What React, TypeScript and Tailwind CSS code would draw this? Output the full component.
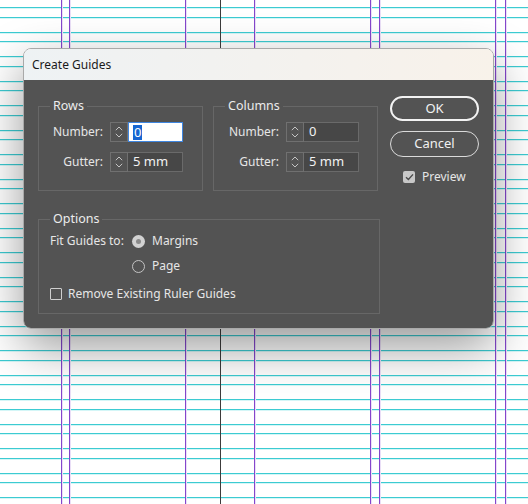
import React from 'react';

const font = { fontFamily: '"Noto Sans", "Open Sans", sans-serif' };

const hLines: number[] = [];
for (let k = 0; k < 21; k++) {
  hLines.push(7 + 24.5 * k);
  hLines.push(16.5 + 24.5 * k);
}
const vLines = [61, 69, 185, 254, 370, 379, 495, 505];

function Chevrons() {
  return (
    <div className="flex h-full w-[18px] flex-col items-center justify-between border border-[#707070] py-[3px]">
      <svg width="8" height="5" viewBox="0 0 8 5">
        <path d="M0.8 4.2 L4 1 L7.2 4.2" fill="none" stroke="#c4c4c4" strokeWidth="1" />
      </svg>
      <svg width="8" height="5" viewBox="0 0 8 5">
        <path d="M0.8 0.8 L4 4 L7.2 0.8" fill="none" stroke="#c4c4c4" strokeWidth="1" />
      </svg>
    </div>
  );
}

function Spinner({ value, focused }: { value: string; focused?: boolean }) {
  return (
    <div className="flex h-[20px]">
      <Chevrons />
      {focused ? (
        <div className="flex h-full w-[55px] items-center border border-[#3f86e0] bg-white pl-[4px]">
          <span className="bg-[#1766d1] px-[1px] text-[13px] leading-[15px] text-white">{value}</span>
        </div>
      ) : (
        <div className="flex h-full w-[55px] items-center border border-l-0 border-[#6a6a6a] bg-[#474747] pl-[5px] text-[13px] text-[#f2f2f2]">
          {value}
        </div>
      )}
    </div>
  );
}

function Group({ title, className, children }: { title: string; className: string; children: React.ReactNode }) {
  return (
    <div className={`relative border border-[#676767] ${className}`}>
      <span className="absolute left-[11px] top-[-10px] bg-[#535353] px-[3px] text-[12.5px] leading-[18px] text-[#ececec]">
        {title}
      </span>
      {children}
    </div>
  );
}

function FieldRow({ label, labelW, value, focused }: { label: string; labelW: string; value: string; focused?: boolean }) {
  return (
    <div className="flex h-[20px] items-center">
      <span className={`${labelW} text-right text-[12px] text-[#e6e6e6]`}>{label}</span>
      <div className="ml-[7px]">
        <Spinner value={value} focused={focused} />
      </div>
    </div>
  );
}

export default function App() {
  return (
    <div className="relative h-[504px] w-[528px] overflow-hidden bg-white" style={font}>
      {hLines.map((y) => (
        <div
          key={'h' + y}
          className="absolute left-0 h-[2px] w-full border-t border-[#3ccbd2] bg-[#d4f6f7]"
          style={{ top: Math.round(y) }}
        />
      ))}
      {vLines.map((x) => (
        <div
          key={'v' + x}
          className="absolute top-0 h-full w-[2px] border-l border-[#8446cc] bg-[#eadff7]"
          style={{ left: x }}
        />
      ))}
      <div className="absolute left-[220px] top-0 h-full w-[1px] bg-[#3c3c3c]" />

      <div className="absolute left-[23px] top-[48px] w-[471px] overflow-hidden rounded-[8px] border border-[#a9a9a9] shadow-[0_18px_48px_rgba(0,0,0,0.4)]">
        <div className="flex h-[31px] items-center bg-gradient-to-r from-[#eef2f4] to-[#f8f2ea] pl-[8px] text-[12px] text-[#1a1a1a]">
          Create Guides
        </div>
        <div className="flex h-[248px] gap-[10px] bg-[#535353] px-[14px]">
          <div className="flex w-[342px] flex-col pt-[26px]">
            <div className="flex gap-[10px]">
              <Group title="Rows" className="h-[85px] w-[165px]">
                <div className="flex flex-col gap-[10px] pt-[15px]">
                  <FieldRow label="Number:" labelW="w-[64px]" value="0" focused />
                  <FieldRow label="Gutter:" labelW="w-[64px]" value="5 mm" />
                </div>
              </Group>
              <Group title="Columns" className="h-[85px] w-[165px]">
                <div className="flex flex-col gap-[10px] pt-[15px]">
                  <FieldRow label="Number:" labelW="w-[65px]" value="0" />
                  <FieldRow label="Gutter:" labelW="w-[65px]" value="5 mm" />
                </div>
              </Group>
            </div>
            <Group title="Options" className="mt-[28px] h-[95px] w-[342px]">
              <div className="flex flex-col pl-[11px] pt-[13px] text-[12px] text-[#e6e6e6]">
                <div className="flex h-[16px] items-center">
                  <span className="w-[82px]">Fit Guides to:</span>
                  <span className="flex h-[13px] w-[13px] items-center justify-center rounded-full bg-[#d2d2d2]">
                    <span className="h-[5px] w-[5px] rounded-full bg-[#8a8a8a]" />
                  </span>
                  <span className="ml-[7px]">Margins</span>
                </div>
                <div className="mt-[9px] flex h-[16px] items-center">
                  <span className="w-[82px]" />
                  <span className="h-[13px] w-[13px] rounded-full border border-[#c4c4c4]" />
                  <span className="ml-[7px]">Page</span>
                </div>
                <div className="mt-[12px] flex h-[16px] items-center">
                  <span className="h-[12px] w-[12px] rounded-[1px] border border-[#cfcfcf]" />
                  <span className="ml-[6px]">Remove Existing Ruler Guides</span>
                </div>
              </div>
            </Group>
          </div>
          <div className="flex w-[90px] flex-col pt-[16px]">
            <div className="flex h-[25px] items-center justify-center rounded-full border-2 border-[#f2f2f2] text-[13px] text-[#f4f4f4]">
              OK
            </div>
            <div className="mt-[10px] flex h-[26px] items-center justify-center rounded-full border border-[#dadada] text-[13px] text-[#f0f0f0]">
              Cancel
            </div>
            <div className="mt-[11px] flex items-center pl-[13px] text-[12px] text-[#e6e6e6]">
              <span className="flex h-[12px] w-[12px] items-center justify-center rounded-[2px] bg-[#c8c8c8]">
                <svg width="9" height="8" viewBox="0 0 9 8">
                  <path d="M1 4.2 L3.4 6.4 L8 1.4" fill="none" stroke="#4a4a4a" strokeWidth="1.4" />
                </svg>
              </span>
              <span className="ml-[7px]">Preview</span>
            </div>
          </div>
        </div>
      </div>
    </div>
  );
}
